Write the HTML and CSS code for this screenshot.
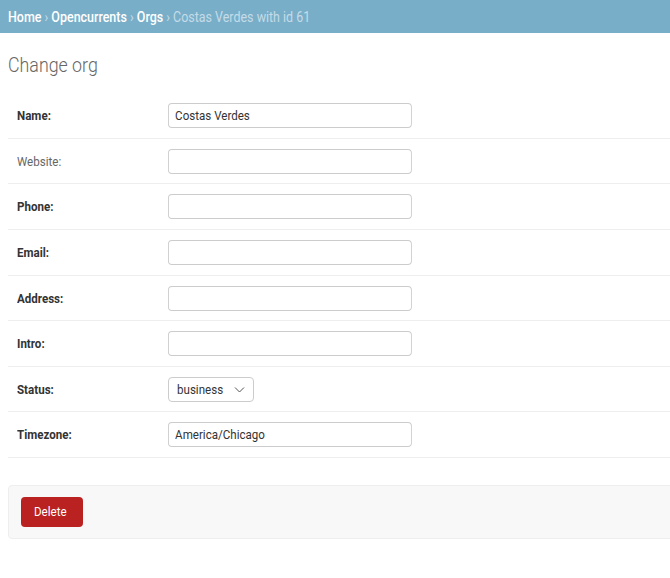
FILE: index.html
```html
<!DOCTYPE html>
<html>
<head>
<meta charset="utf-8">
<link rel="stylesheet" href="styles.css">
</head>
<body>
<div class="breadcrumbs">
  <span class="sq"><a href="#">Home</a> › <a href="#">Opencurrents</a> › <a href="#">Orgs</a> › Costas Verdes with id 61</span>
</div>
<div class="content">
  <h1><span class="sq">Change org</span></h1>
  <form>
    <fieldset class="module">
      <div class="form-row"><label class="required"><span class="sq">Name:</span></label><input class="vText" type="text" value="Costas Verdes"></div>
      <div class="form-row"><label><span class="sq">Website:</span></label><input class="vText" type="text"></div>
      <div class="form-row"><label class="required"><span class="sq">Phone:</span></label><input class="vText" type="text"></div>
      <div class="form-row"><label class="required"><span class="sq">Email:</span></label><input class="vText" type="text"></div>
      <div class="form-row"><label class="required"><span class="sq">Address:</span></label><input class="vText" type="text"></div>
      <div class="form-row"><label class="required"><span class="sq">Intro:</span></label><input class="vText" type="text"></div>
      <div class="form-row"><label class="required"><span class="sq">Status:</span></label>
        <div class="select"><span class="sq">business</span>
          <svg width="11" height="7" viewBox="0 0 11 7"><path d="M1 1.5 L5.5 6 L10 1.5" fill="none" stroke="#555" stroke-width="1"/></svg>
        </div>
      </div>
      <div class="form-row"><label class="required"><span class="sq">Timezone:</span></label><input class="vText" type="text" value="America/Chicago"></div>
    </fieldset>
    <div class="submit-row">
      <a href="#" class="deletelink"><span class="sq">Delete</span></a>
    </div>
  </form>
</div>
</body>
</html>
```
FILE: styles.css
```css
html, body {
  margin: 0;
  padding: 0;
  overflow: hidden;
}
body {
  font-family: Roboto, "Liberation Sans", sans-serif;
  color: #333;
  background: #fff;
  font-size: 14px;
}
.sq {
  display: inline-block;
  transform: scaleX(0.89);
  transform-origin: left center;
  white-space: nowrap;
}
.breadcrumbs {
  background: #79aec8;
  height: 33px;
  box-sizing: border-box;
  padding: 9px 8px 0 8px;
  font-size: 14px;
  color: #c4dce8;
  line-height: 16px;
  white-space: nowrap;
}
.breadcrumbs a {
  color: #fff;
  font-weight: 500;
  text-decoration: none;
}
.content {
  padding: 0 0 0 8px;
}
h1 {
  margin: 20px 0 16px 0;
  font-size: 20px;
  font-weight: 300;
  color: #666;
  line-height: 24px;
}
form {
  margin: 0;
}
fieldset.module {
  margin: 0;
  padding: 0;
  border: none;
}
.form-row {
  display: flex;
  align-items: center;
  padding: 10px 10px 9.625px 9px;
  border-bottom: 1px solid #eee;
}
.form-row label {
  width: 151px;
  flex: none;
  font-size: 13px;
  color: #666;
}
.form-row label.required {
  color: #333;
  font-weight: 700;
}
.vText {
  box-sizing: border-box;
  width: 274px;
  margin-right: -30px;
  height: 25px;
  padding: 4px 7px;
  border: 1px solid #ccc;
  border-radius: 4.5px / 4px;
  font-family: Roboto, "Liberation Sans", sans-serif;
  font-size: 13px;
  color: #333;
  outline: none;
  transform: scaleX(0.89);
  transform-origin: left center;
}
.select {
  box-sizing: border-box;
  width: 86px;
  height: 25px;
  border: 1px solid #ccc;
  border-radius: 4px;
  display: flex;
  align-items: center;
  justify-content: space-between;
  padding: 0 8px 0 8px;
  font-size: 13px;
  color: #333;
}
.submit-row {
  margin: 27px -10px 0 0;
  padding: 11px 12px;
  background: #f8f8f8;
  border: 1px solid #eee;
  border-radius: 4px;
  display: flex;
}
.deletelink {
  display: block;
  background: #ba2121;
  color: #fff;
  text-decoration: none;
  font-size: 13px;
  height: 30px;
  line-height: 30px;
  width: 62px;
  box-sizing: border-box;
  padding-left: 13px;
  border-radius: 4px;
}
```
